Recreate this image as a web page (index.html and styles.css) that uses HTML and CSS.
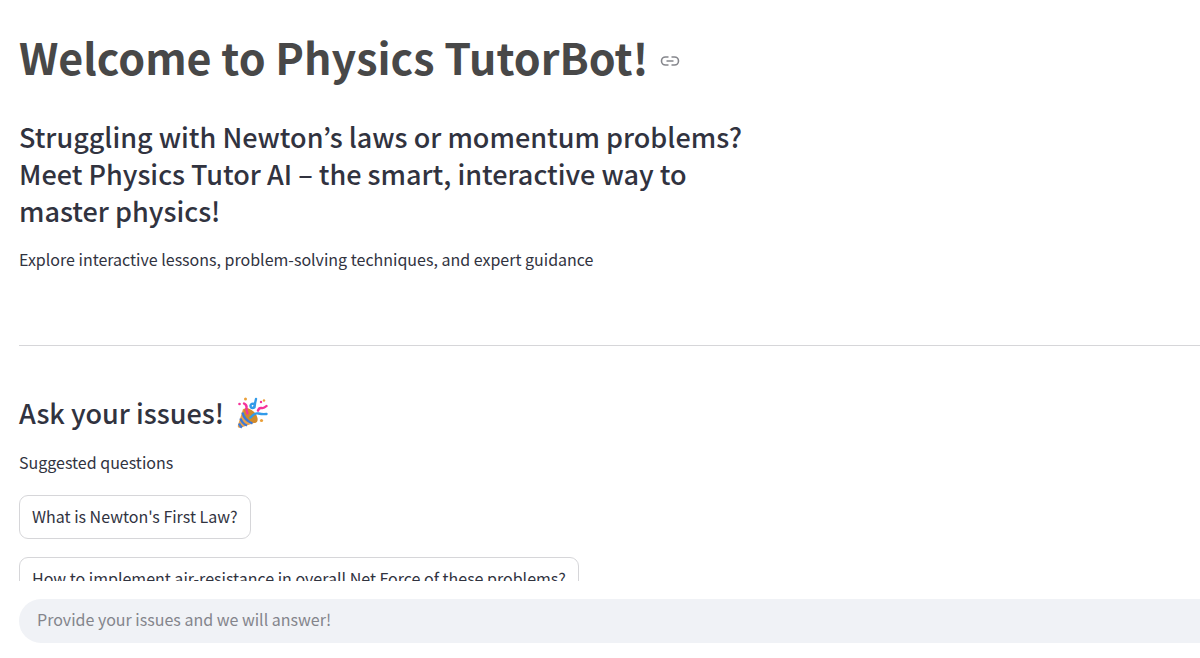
FILE: index.html
```html
<!DOCTYPE html>
<html lang="en">
<head>
<meta charset="utf-8">
<meta name="viewport" content="width=device-width, initial-scale=1">
<title>Physics TutorBot</title>
<link rel="stylesheet" href="styles.css">
</head>
<body>
<main class="content">
  <header class="intro">
    <h1 class="title" id="welcome">Welcome to Physics TutorBot!
      <a class="anchor" href="#welcome" aria-label="Link to heading"><svg viewBox="0 0 20 12" width="20" height="12" fill="none" stroke="currentColor" stroke-width="1.6"><path d="M8.500 2H5.500a4 4 0 0 0 0 8H8.500M11.500 2h3a4 4 0 0 1 0 8h-3M6.500 6h7"/></svg></a>
    </h1>
    <h2 class="subtitle">Struggling with Newton’s laws or momentum problems? Meet Physics Tutor AI – the smart, interactive way to master physics!</h2>
    <p class="text">Explore interactive lessons, problem-solving techniques, and expert guidance</p>
  </header>
  <hr class="divider">
  <section class="ask">
    <h2 class="ask-title">Ask your issues!
      <svg class="party" viewBox="0 0 32 32" width="32" height="32" aria-hidden="true">
        <path d="M7 12Q12 10 17 16t4 9L4 31Q1 31 2 28z" fill="#eba24b"/>
        <ellipse cx="14.500" cy="18.500" rx="5" ry="9" transform="rotate(-43 14.500 18.500)" fill="#d18a2b"/>
        <g fill="none" stroke="#3c7ad9" stroke-width="2.400">
          <path d="M6.500 15.500Q8 23 16.500 26.500M4.500 21.500Q6 26.500 11 28.500M3 26.500Q4 29 6 30.500"/>
        </g>
        <g fill="none" stroke-linecap="round" stroke-width="2.400">
          <path d="M8 6.500q3 1.500 2.500 4t1 6" stroke="#f5329a"/>
          <path d="M22 13.500q1-3 3.500-2.500t5-2" stroke="#f5329a"/>
          <path d="M20 2q-1 3.500-1.500 8.500M19 7q-4-1-4.500 1.500 0 2.500 2 2.500t2-3" stroke="#329be9"/>
          <path d="M14.500 20.500q4-5 8-4t8 .500" stroke="#329be9"/>
        </g>
        <g fill="#f5329a"><circle cx="3.500" cy="7" r="1.300"/><circle cx="25" cy="5" r="1.200"/></g>
        <g fill="#eaa03a"><circle cx="9.500" cy="2" r="1.500"/><circle cx="28" cy="3.500" r="1.200"/><circle cx="25.500" cy="23.500" r="1.600"/></g>
      </svg>
    </h2>
    <p class="text">Suggested questions</p>
    <button class="question" type="button">What is Newton's First Law?</button>
    <button class="question" type="button">How to implement air-resistance in overall Net Force of these problems?</button>
  </section>
</main>
<form class="composer"><input class="chat" type="text" aria-label="Your issue" placeholder="Provide your issues and we will answer!"></form>
</body>
</html>
```
FILE: styles.css
```css
* { box-sizing: border-box; }
body { margin: 0; height: 100vh; display: flex; flex-direction: column; overflow: hidden; background: #fff; color: #31333f; font: 16px/28px "Noto Sans CJK KR", sans-serif; }
.content { flex: 1; min-height: 0; overflow: hidden; padding: 26px 0 0 19px; }
.title { display: flex; align-items: center; gap: 12px; margin: 0; font-size: 43px; line-height: 60px; font-weight: 700; color: #484848; }
.anchor { display: flex; padding-top: 10px; color: #85868c; }
.subtitle { margin: 32px 0 16px; max-width: 740px; font-size: 27px; line-height: 37px; font-weight: 500; }
.text { margin: 0; }
.divider { margin: 72px 0 48px; border: 0; border-top: 1px solid #d6d6d9; }
.ask-title { display: flex; align-items: center; gap: 12px; margin: 0 0 17px; font-size: 27px; line-height: 37px; font-weight: 500; }
.question { display: block; height: 44px; margin: 19px 0 0; padding: 0 12px 2px; border: 1px solid #d6d6d9; border-radius: 9px; background: #fff; color: inherit; font: inherit; }
.question + .question { margin-top: 18px; }
.composer { padding: 18px 0 15px 19px; }
.chat { display: block; width: 100%; height: 44px; padding: 0 18px 4px; border: 0; border-radius: 22px 0 0 22px; background: #f0f2f6; font: inherit; }
.chat::placeholder { color: #84858c; opacity: 1; }
```
